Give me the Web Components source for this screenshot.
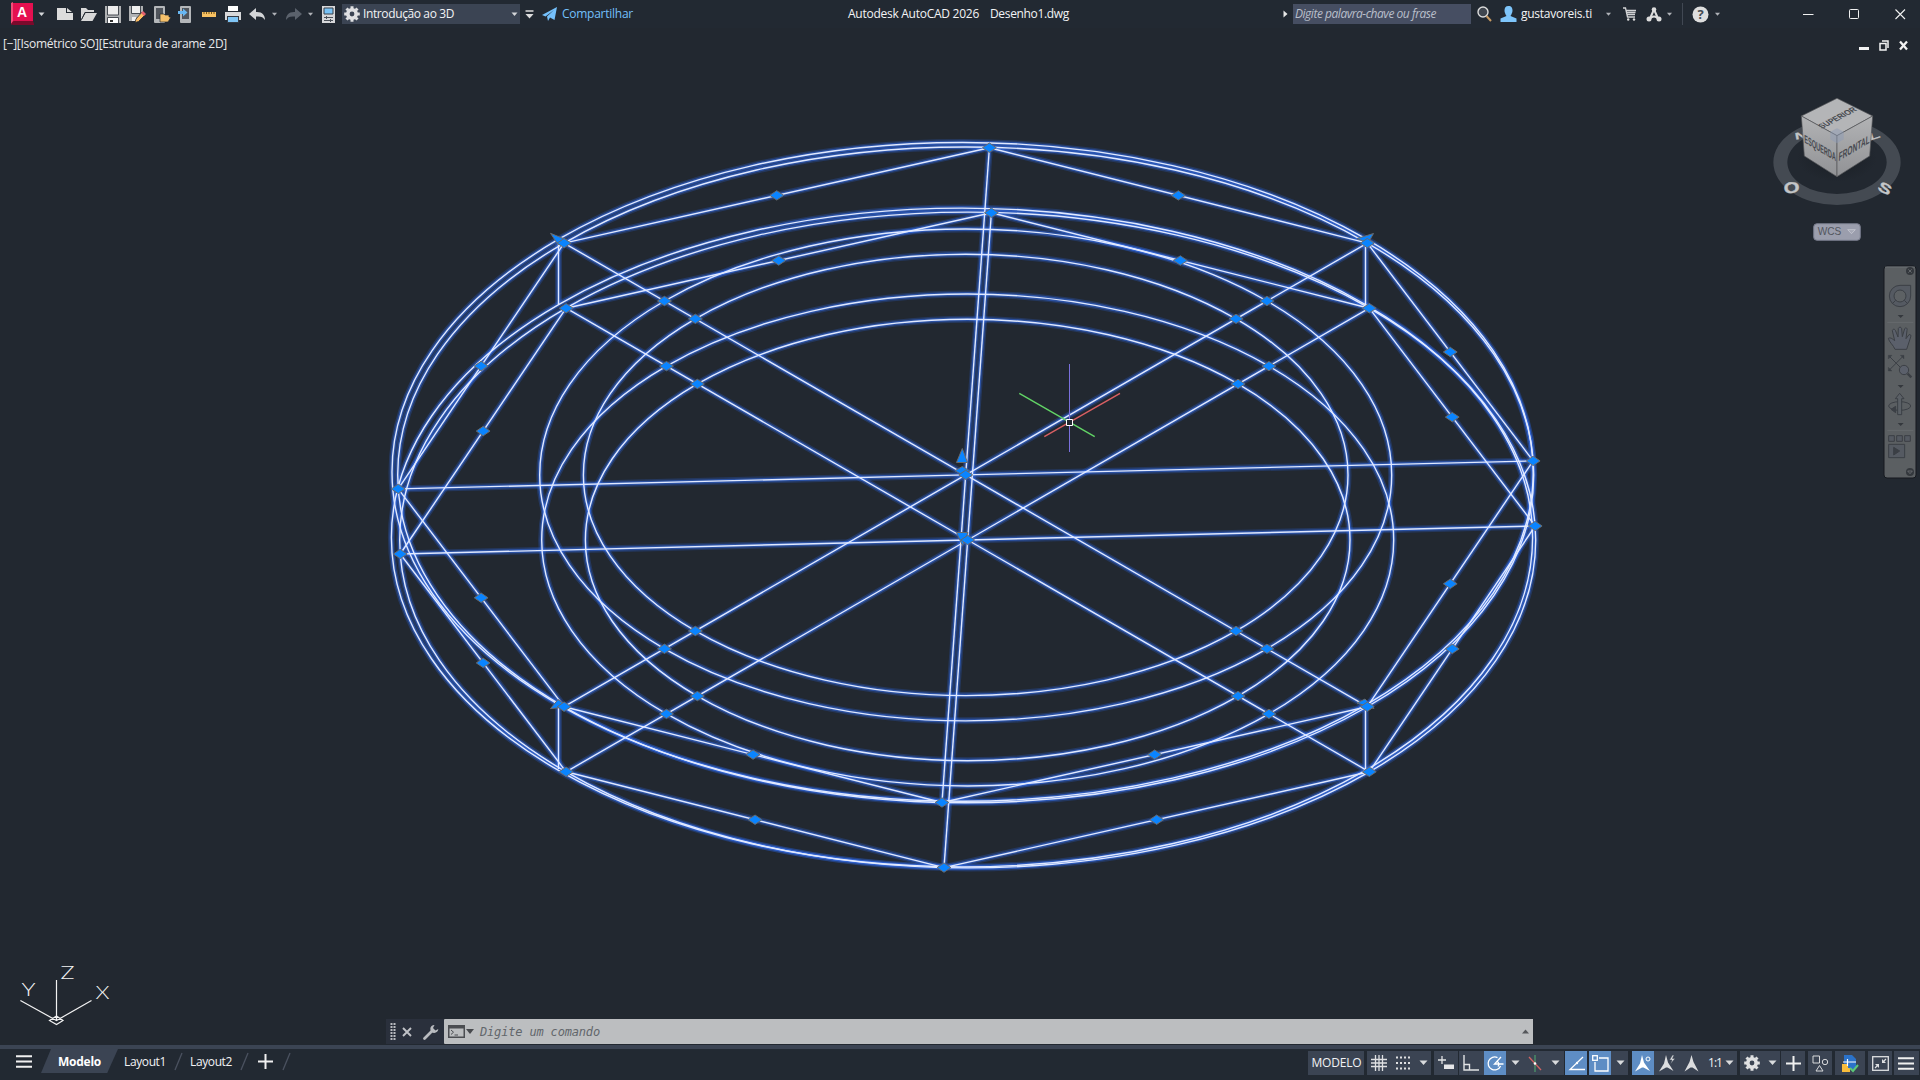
<!DOCTYPE html>
<html lang="pt-BR">
<head>
<meta charset="utf-8">
<title>Autodesk AutoCAD 2026 Desenho1.dwg</title>
<style>
html,body{margin:0;height:100%;overflow:hidden;background:#222830}
body{font-family:"Open Sans","Noto Sans",sans-serif;font-size:12px;color:#f2f3f5}
</style>
</head>
<body>
<cad-app></cad-app>
<script>
const define=(name,html,after)=>customElements.define(name,class extends HTMLElement{
  connectedCallback(){
    if(this.shadowRoot)return;
    this.attachShadow({mode:'open'}).innerHTML=typeof html==='function'?html(this):html;
    if(after)after(this);
  }
});

/* text spaced so that it fills a given width */
define('fit-text','<style>:host{display:inline-block;white-space:pre;flex:none}</style><span><slot></slot></span>',el=>{
  const w=+el.getAttribute('w'),n=el.textContent.length,s=el.shadowRoot.querySelector('span');
  el.style.width=w+'px';
  const nat=s.getBoundingClientRect().width;
  s.style.letterSpacing=((w-nat)/n)+'px';
});

const caret='<path d="M-3-1.5H3L0 2Z" fill="#d4d6d9"/>';
/* flexible gap of fixed width */
define('gap-x',el=>`<style>:host{display:block;flex:none;width:${el.getAttribute('w')}px}</style>`);

const ICONS={
 logo:[24,24,'<path d="M0 3 3 1V20L0 23Z" fill="#a0092f"/><path d="M2 1H22V19H2Z" fill="#e51050"/><path d="M0 1 2 0V19L0 22Z" fill="#f0507a"/><path d="M0 22 3 19H22L23 22V23H2Z" fill="#7c0a2c"/>'],
 down:[7,6,'<g transform="translate(3.5 3)">'+caret+'</g>'],
 downDim:[7,6,'<g transform="translate(3.5 3) scale(.85)" opacity=".8">'+caret+'</g>'],
 downBig:[9,6,'<path d="M.5.5H8.5L4.5 5Z" fill="#d9dbdd"/>'],
 right:[5,8,'<path d="M.5.5 4.5 4 .5 7.5Z" fill="#e8e8e8"/>'],
 fresh:[16,14,'<path d="M0 1H9V6H16V13H0Z" fill="#dcdcdc"/><path d="M10 1 15 5H10Z" fill="#dcdcdc"/>'],
 open:[17,15,'<path d="M1 1H6L8 3H14V5H5L1 13Z" fill="#d8d8d8"/><path d="M5.500 6H17L12.500 14H1Z" fill="#d8d8d8"/><path d="M5 5.500 1.500 12.500M5 5.500H15" stroke="#222830" stroke-width=".9" fill="none"/>'],
 save:[16,17,'<path d="M0 0H16V17H0Z" fill="#b0b2b4"/><path d="M3 0H13V9H3Z" fill="#ededed"/><path d="M3 12H13V17H3Z" fill="#fff"/><path d="M5 14h3v2H5z" fill="#333"/><path d="M2.500 0V9H13.500V0M2.500 17V11.500H13.500V17" fill="none" stroke="#464b52"/>'],
 saveas:[17,17,'<path d="M0 0H14V8L7 15H0Z" fill="#b0b2b4"/><path d="M3 0H11V7H3Z" fill="#eee"/><path d="M2.500 0V7.500H11.500V0" fill="none" stroke="#464b52"/><path d="M3 11H7V15H3Z" fill="#eee"/><path d="M7 13 13 6 16 9 9.500 15.500 6 16.500Z" fill="#ffbe63" stroke="#222830" stroke-width=".8"/><path d="M12 7 14 5 17 8 15 10Z" fill="#e5616f"/>'],
 phoneOpen:[17,17,'<rect width="11" height="17" rx="1" fill="#b4b7ba"/><path d="M2 2H9V13H2Z" fill="#50555c"/><path d="M6 8H10L11 9H15V11H17L14 16H6Z" fill="#f5c06a" stroke="#222830" stroke-width=".7"/>'],
 phoneOut:[13,17,'<rect x="2" width="11" height="17" rx="1" fill="#b4b7ba"/><path d="M4 2H11V13H4Z" fill="#50555c"/><path d="M0 5H5V2.500L9.500 6.500 5 10.500V8H0Z" fill="#68b7f2"/>'],
 ruler:[14,5,'<path d="M0 0H14V5H0Z" fill="#f9c262"/><path d="M2 0V2M4.500 0V2M7 0V2M9.500 0V2M12 0V2" stroke="#7b5a1c"/>'],
 print:[16,17,'<path d="M3 0H13V5H3Z" fill="#fff"/><path d="M0 6H16V14H0Z" fill="#d7d8da"/><path d="M2 10H14V17H2Z" fill="#343a43"/><path d="M3 11H13V16H3Z" fill="#7fc5f5"/>'],
 undo:[17,13,'<path d="M0 6 7 0V4C13 3.500 16 7 16 12 14 9 12 8 7 8.500V12Z" fill="#d3d5d7"/>'],
 redo:[17,13,'<path d="M17 6 10 0V4C4 3.500 1 7 1 12 3 9 5 8 10 8.500V12Z" fill="#5b626c"/>'],
 sheet:[13,17,'<rect width="13" height="17" fill="#d7d8da"/><path d="M2 2H11V8H2Z" fill="#79c3f6" stroke="#3a4048"/><path d="M2 11.500H11M2 14.500H11M4.500 10V13M8.500 13V16" stroke="#4a5058"/>'],
 gear:[16,16,'<circle cx="8" cy="8" r="4.200" fill="none" stroke="#dfe0e2" stroke-width="3.600"/><g stroke="#dfe0e2" stroke-width="3"><path d="M8 .2V3M8 13V15.800M.2 8H3M13 8H15.800M2.500 2.500 4.300 4.300M11.700 11.700 13.500 13.500M2.500 13.500 4.300 11.700M11.700 4.300 13.500 2.500"/></g>'],
 custom:[9,9,'<path d="M.5 1H8.500" stroke="#ddd" stroke-width="1.500"/><path d="M.5 4H8.500L4.500 8.500Z" fill="#ddd"/>'],
 send:[16,14,'<path d="M0 8 15 0 12.500 13 8 10.500 6 14 5 9.500 12 3 3.500 9.500Z" fill="#74c0fb"/>'],
 search:[15,16,'<circle cx="6" cy="6" r="5" fill="#40464f" stroke="#dcdcdc" stroke-width="1.400"/><path d="M9.500 10 14 15" stroke="#c99a62" stroke-width="2"/>'],
 user:[17,16,'<path d="M8.500 0C11.500 0 12.500 2 12.500 4.500S10.500 10 10.500 10L16.500 12.500V16H.5V12.500L6.500 10S4.500 7 4.500 4.500 5.500 0 8.500 0" fill="#7ec5fb"/>'],
 cart:[14,14,'<path d="M0 1H2.500L4.500 10H12M3.500 3.500H13M4 5.500H12.500M4.500 7.500H12" stroke="#d2d3d5" fill="none" stroke-width="1.300"/><circle cx="5.200" cy="12.500" r="1.200" fill="#ddd"/><circle cx="11" cy="12.500" r="1.200" fill="#ddd"/>'],
 adsk:[16,15,'<path d="M8 2.500 3.500 12.500M8 2.500 12.500 12.500M4 11.500Q8 7.500 12 11.500" stroke="#dcdcdc" stroke-width="2" fill="none"/><circle cx="8" cy="2.500" r="2.300" fill="#dcdcdc"/><circle cx="3" cy="12" r="2.500" fill="#dcdcdc"/><circle cx="13" cy="12" r="2.500" fill="#dcdcdc"/>'],
 help:[17,17,'<circle cx="8.500" cy="8.500" r="8" fill="#dedede"/>'],
 min:[11,11,'<path d="M0 5.500H10.500" stroke="#f1f1f1"/>'],
 max:[11,11,'<rect x=".5" y=".5" width="9" height="9" rx="1" fill="none" stroke="#f1f1f1"/>'],
 close:[11,11,'<path d="M.5.5 10 10M10 .5.5 10" stroke="#f1f1f1" stroke-width="1.100"/>'],
 vmin:[10,11,'<path d="M0 7H10V10H0Z" fill="#f2f2f2"/>'],
 vrest:[10,11,'<path d="M3 1H9V8M1 3.500H7V10H1Z" stroke="#f2f2f2" stroke-width="1.500" fill="none"/>'],
 vclose:[9,9,'<path d="M1 .5 8 8.500M8 .5 1 8.500" stroke="#f2f2f2" stroke-width="2.300"/>'],
 burger:[16,13,'<path d="M0 1.200H16M0 6.500H16M0 11.800H16" stroke="#f0f0f0" stroke-width="2"/>'],
 plus:[15,15,'<path d="M7.500 0V15M0 7.500H15" stroke="#f0f0f0" stroke-width="2"/>'],
 slash:[9,17,'<path d="M8 0 1 17" stroke="#4b5260" stroke-width="1.300"/>'],
 grip:[6,17,'<path d="M1.500 0V17M4.500 0V17" stroke="#b9bbc0" stroke-width="2" stroke-dasharray="2 1"/>'],
 cx:[10,10,'<path d="M1 1 9 9M9 1 1 9" stroke="#c0c2c6" stroke-width="1.900"/>'],
 wrench:[16,16,'<path d="M1.500 14.500 9 7" stroke="#b9bbbf" stroke-width="2.800" stroke-linecap="round"/><path d="M11.500 1A4 4 0 1 0 15.300 5L12.500 6.500 10 4Z" fill="#b9bbbf"/>'],
 term:[17,13,'<path d="M.75 1H16.250V12.200H.75Z" fill="none" stroke="#4b4d51" stroke-width="1.500"/><path d="M0 0H17V3.500H0Z" fill="#4b4d51"/><path d="M3 5 5.500 7.200 3 9.500M6.500 10H10" stroke="#4b4d51" fill="none"/>'],
 cdown:[8,5,'<path d="M0 0H8L4 5Z" fill="#47494d"/>'],
 cup:[8,5,'<path d="M0 4.500H7L3.500.5Z" fill="#55575b"/>'],
 grid:[16,16,'<path d="M4.500 0V16M8 0V16M11.500 0V16M0 4.500H16M0 8H16M0 11.500H16" stroke="#dfe0e2" stroke-width="1.300"/>'],
 dots:[14,14,'<path d="M0 1.500H14M0 7H14M0 12.500H14" stroke="#dfe0e2" stroke-width="2" stroke-dasharray="2 2"/>'],
 snap:[17,14,'<path d="M4 0V8M0 4H8" stroke="#e2e3e5" stroke-width="1.300"/><path d="M6 8.500H16V13H6Z" fill="#e6e6e8"/>'],
 ortho:[18,17,'<path d="M2 0V15H17M2 9.500H7.500V15" stroke="#e2e3e5" stroke-width="1.400" fill="none"/>'],
 polar:[17,17,'<path d="M10.500 2.600A6.500 6.500 0 1 0 13.600 11M16.500 9H7.500L14 2M10.200 6.200A4 4 0 0 1 11 11.500" stroke="#fff" stroke-width="1.300" fill="none"/>'],
 iso:[14,17,'<path d="M7 0V17" stroke="#51ad70"/><path d="M1 2 13 15" stroke="#d06464" stroke-width="1.300"/><circle cx="7" cy="8.500" r="1.300" fill="#fff"/>'],
 track:[17,15,'<path d="M15 1 2 13.500H17" stroke="#fff" stroke-width="1.300" fill="none"/><circle cx="9" cy="7" r="1.200" fill="#fff"/>'],
 osnap:[17,17,'<path d="M3 7V16H16V3H7" stroke="#fff" stroke-width="1.300" fill="none"/><rect x=".7" y=".7" width="4.600" height="4.600" fill="none" stroke="#fff" stroke-width="1.300"/>'],
 ann1:[17,17,'<path d="M7 0 9 7.500 15 16 8.500 12.500 7 12.500 0 16.500 5 8.500Z" fill="#fff"/><circle cx="13" cy="4" r="2" fill="none" stroke="#fff"/>'],
 ann2:[17,17,'<path d="M7 0 9 7.500 14.500 16 8.500 12.500 7 12.500 0 16.500 5 8.500Z" fill="#dcdddf"/><path d="M13.500 0 10.500 5H13L11.500 9 16 3.500H13.500L15 0Z" fill="#dcdddf" stroke="#3b4453" stroke-width=".5"/>'],
 ann3:[15,17,'<path d="M7.500 0 9.500 7 14.500 16.500 8.500 12.500H6.500L.5 16.500 5.500 7Z" fill="#dcdddf"/>'],
 shapes:[17,17,'<path d="M1 1H7.500V8H1Z" stroke="#d8d9db" fill="none"/><circle cx="13" cy="7" r="2.700" stroke="#d8d9db" fill="none"/><path d="M7.500 10.500 11 16H4Z" stroke="#d8d9db" fill="none"/>'],
 file:[17,17,'<path d="M2 0H10L14 4V14H2Z" fill="#2b72c9"/><path d="M0 9H6V13H8V17H0Z" fill="#f9bd3c"/><path d="M5.500 4V11M1 7H14" stroke="#fff" stroke-width="1.200"/><path d="M8 13 11 16 16 10" stroke="#5cc878" stroke-width="2" fill="none"/>'],
 clean:[17,15,'<rect x=".7" y=".7" width="15.600" height="13.600" fill="none" stroke="#dfe0e2" stroke-width="1.300"/><path d="M3 8H7V12ZM10 3V7H14Z" fill="#dfe0e2"/><path d="M3 12 6 9M14 3 11 6" stroke="#dfe0e2" stroke-width="1.200"/>']
};
define('cad-icon',el=>{
  const [w,h,g]=ICONS[el.getAttribute('n')];
  return `<style>:host{display:block;flex:none;width:${w}px;height:${h}px}svg{display:block;overflow:visible}</style><svg width="${w}" height="${h}" viewBox="0 0 ${w} ${h}">${g}</svg>`;
});

/* every item carries the x where it starts; gaps are derived from the previous end */
const row=(items,start=0)=>{
  let x=start,out='';
  for(const [at,w,html] of items){ out+=`<gap-x w="${(at-x).toFixed(2)}"></gap-x>${html}`; x=at+w; }
  return out;
};
const ic=(at,n)=>[at,ICONS[n][0],`<cad-icon n="${n}"></cad-icon>`];
const tx=(at,w,t,c='')=>[at,w,`<fit-text class="${c}" w="${w}">${t}</fit-text>`];

define('title-bar',()=>`<style>
:host{display:flex;align-items:center;height:28px;background:#222932;font-size:12px}
fit-text{padding-bottom:1px}
.logo{display:grid;width:24px;height:24px;flex:none}
.logo>*{grid-area:1/1}.logo b{font:bold 14px "Liberation Sans",sans-serif;color:#fff;place-self:center;transform:translate(-1px,-2px)}
.sel,.find{display:flex;align-items:center;width:178px;height:20px;background:#3b4453;flex:none}
.find{background:#464e62;color:#b9bfca;font-style:italic}
.share{color:#74c0fb}
.help{display:grid;width:17px;flex:none}.help>*{grid-area:1/1}.help b{place-self:center;color:#444a52;font-size:13px;line-height:17px}
.sep{width:1px;height:22px;background:#414853;flex:none}
</style>`+row([
 [11,24,'<div class="logo"><cad-icon n="logo"></cad-icon><b>A</b></div>'],ic(38,'down'),ic(57,'fresh'),ic(80,'open'),ic(105,'save'),ic(129,'saveas'),
 ic(154,'phoneOpen'),ic(178,'phoneOut'),ic(202,'ruler'),ic(225,'print'),ic(249,'undo'),ic(271,'downDim'),ic(285,'redo'),ic(307,'downDim'),ic(322,'sheet'),
 [342,178,'<div class="sel">'+row([ic(2,'gear'),tx(21,91,'Introdução ao 3D'),ic(169,'down')])+'</div>'],
 ic(524.5,'custom'),ic(542,'send'),tx(562,71,'Compartilhar','share'),
 tx(848,131,'Autodesk AutoCAD 2026'),tx(990,79,'Desenho1.dwg'),
 ic(1283,'right'),[1293,178,'<div class="find">'+row([tx(2,141,'Digite palavra-chave ou frase')])+'</div>'],
 ic(1477,'search'),ic(1500,'user'),tx(1521,71,'gustavoreis.ti'),ic(1605,'downDim'),ic(1623,'cart'),ic(1646,'adsk'),ic(1666,'downDim'),
 [1682,1,'<div class="sep"></div>'],[1692,17,'<div class="help"><cad-icon n="help"></cad-icon><b>?</b></div>'],ic(1714,'downDim'),
 ic(1803,'min'),ic(1849,'max'),ic(1895,'close')
]));

define('view-header',()=>`<style>:host{display:flex;align-items:center;height:32px;font-size:12px;color:#e8e9eb}fit-text{padding-bottom:2px}cad-icon{margin-top:2px}</style>`
 +row([tx(3,224,'[−][Isométrico SO][Estrutura de arame 2D]'),ic(1859,'vmin'),ic(1879,'vrest'),ic(1899,'vclose')]));

define('wire-model',()=>{
  const K=.5773,S=Math.SQRT1_2,figs=[],grips=[];
  const ell=(cx,cy,a)=>figs.push(`<ellipse cx="${cx}" cy="${cy}" rx="${a}" ry="${a*K}"/>`);
  const ln=(a,b)=>figs.push(`<path d="M${a}L${b}"/>`);
  [[965.7,474.9,962.6,471.9],[967.7,540,962,537.5]].forEach(([cx,cy,ox,oy])=>{
    const c=[cx,cy];
    ell(cx,cy,568);ell(ox,oy,570.6);ell(cx,cy,426);ell(cx,cy,382.3);
    const P=[[23.7,-327.2],[401.6,-231.8],[567.5,-14],[401.6,231.8],[-23.7,327.6],[-401.6,231.8],[-567.5,14],[-401.6,-231.8]].map(([x,y])=>[cx+x,cy+y]);
    P.forEach((p,i)=>{const q=P[(i+1)%8];ln(p,q);ln(c,p);grips.push(p,[(p[0]+q[0])/2,(p[1]+q[1])/2]);});
    for(const a of [426,382.3])for(const sx of [-1,1])for(const sy of [-1,1])grips.push([cx+sx*a*S,cy+sy*a*S*K]);
    grips.push(c);
  });
  for(const x of [558.5,1365.5]){ln([x,240],[x,304]);ln([x,704],[x,769]);}
  const f=figs.join('');
  const tri=d=>`<path d="${d}"/>`;
  return `<style>:host{display:block}svg{display:block}
  .g{fill:none}.g1{stroke:#2c63e0;stroke-opacity:.26;stroke-width:7}.g2{stroke:#346eee;stroke-opacity:.48;stroke-width:4}.g3{stroke:#e0e9ff;stroke-width:1.4}
  .h{fill:#0a84ff;stroke:#686a6c;stroke-width:1}
  text{font-family:Lato,"Open Sans",sans-serif;font-weight:300;font-size:18px;fill:#f4f4f4}</style>
  <svg width="1920" height="985" viewBox="0 60 1920 985">
  <g class="g g1">${f}</g><g class="g g2">${f}</g><g class="g g3">${f}</g>
  <g class="h">${tri('M962.3 448.500 967.500 462.500H956.500Z')+tri('M955 470.700 962.300 466.500 969.500 470.700 962.300 475Z')+tri('M956.500 532.500H968L962.500 545.500Z')+tri('M550.500 233.300 567 240 558 244.500Z')+tri('M1373.500 233.500 1368 243 1357 238.500Z')+tri('M550.500 708.600 558 699.500 568 707Z')+tri('M1357 703 1365 699 1374 708.500Z')}
  ${grips.map(([x,y])=>`<path d="M${x-6.900} ${y}L${x} ${y-4.700}L${x+6.900} ${y}L${x} ${y+4.700}Z"/>`).join('')}</g>
  <g stroke-width="1.400"><path d="M1069.500 364V452" stroke="#7a70dc" stroke-width="1"/><path d="M1019.300 393.300 1094.700 436.700" stroke="#62d566"/><path d="M1120 393.300 1044.300 436.700" stroke="#d95f63"/></g>
  <path d="M1066.500 419.500H1072.500V425.500H1066.500Z" fill="#222830" stroke="#fff"/>
  <g fill="none" stroke="#f2f2f2" stroke-width="1.200"><path d="M56.500 980V1020M20.400 1000.500 56.500 1020.500 91.500 1000.500M49.500 1020.500 56.500 1016 63 1020.500 56.500 1024.500Z"/></g>
  <text x="60.500" y="979" textLength="14" lengthAdjust="spacingAndGlyphs">Z</text><text x="21.500" y="996" textLength="14" lengthAdjust="spacingAndGlyphs">Y</text><text x="95.500" y="999" textLength="14" lengthAdjust="spacingAndGlyphs">X</text>
  </svg>`;
});

define('view-cube',`<style>:host{display:block}svg{display:block}text{font-family:"Liberation Sans",sans-serif}</style>
<svg width="180" height="164" viewBox="0 0 540 492">
<defs><linearGradient id="l" x2="0" y2="1"><stop stop-color="#b2b3b5"/><stop offset="1" stop-color="#919295"/></linearGradient><radialGradient id="s"><stop stop-color="#14181d" stop-opacity=".6"/><stop offset="1" stop-color="#14181d" stop-opacity="0"/></radialGradient></defs>
<path fill-rule="evenodd" fill="#444a52" d="M100 247A191 128 0 1 0 482 247A191 128 0 1 0 100 247ZM142 247A149 95 0 1 1 440 247A149 95 0 1 1 142 247Z"/>
<ellipse cx="291" cy="235" rx="120" ry="70" fill="url(#s)"/>
<g fill="#c4c6c8" stroke="#c4c6c8" font-weight="bold"><text font-size="42" text-anchor="middle" transform="translate(157 339) rotate(-8) scale(1.450 1.100)">O</text><text font-size="42" text-anchor="middle" transform="translate(428 338) rotate(28) scale(1.450 1)">S</text><text font-size="38" text-anchor="middle" transform="translate(184 176) rotate(-10) scale(1.300 .75)">N</text><text font-size="38" text-anchor="middle" transform="translate(406 177) rotate(-18) scale(1.500 .75)">L</text></g>
<g stroke="#515356" stroke-width="2"><path d="M291 55 398 108 291 167 184 108Z" fill="#b4b5b7"/><path d="M184 108 291 167V290L193 228Z" fill="url(#l)"/><path d="M398 108 291 167V290L389 228Z" fill="url(#l)"/></g>
<path d="M291 145 311 155V178L291 190 271 178V155Z" fill="#8e9bb5" opacity=".5"/>
<g fill="#474a50" font-weight="bold" text-anchor="middle"><text font-size="33" transform="matrix(.87 -.46 .62 .5 299 119)" textLength="122" lengthAdjust="spacingAndGlyphs">SUPERIOR</text><text font-size="35" transform="matrix(.84 .5 .04 1 241 216)" textLength="113" lengthAdjust="spacingAndGlyphs">ESQUERDA</text><text font-size="36" transform="matrix(.84 -.5 -.04 1 342 216)" textLength="110" lengthAdjust="spacingAndGlyphs">FRONTAL</text></g>
<rect x="221" y="431" width="140" height="50" rx="10" fill="#9b9ead" stroke="#747888" stroke-width="3"/><text x="233" y="465" font-size="33" textLength="71" lengthAdjust="spacingAndGlyphs" fill="#52565e">WCS</text><path d="M323 449H346L334.500 461Z" fill="#a5a8b6" stroke="#d0d2da" stroke-width="2"/>
</svg>`);

define('nav-bar',`<style>:host{display:block}svg{display:block}</style>
<svg width="34" height="214" viewBox="429 555 102 642"><rect x="432" y="558" width="96" height="636" rx="9" fill="#5b5f62" stroke="#16191e" stroke-width="3"/><path d="M435 561H525" stroke="#777b7e" stroke-width="2"/>
<path d="M442 727H520M442 1051H520" stroke="#6c7073" stroke-width="2"/>
<g fill="none" stroke="#3b3f45" stroke-width="3"><path d="M480 616H512V648A32 32 0 1 1 480 616Z" fill="#555a62"/><circle cx="480" cy="648" r="18" fill="#5d6164"/><path d="M467 661 457 671M493 661 503 671"/>
<path d="M465 808C460 795 447 786 445 775 452 771 459 778 464 782L457 752C459 745 465 747 467 753L474 771 475 745C478 740 483 740 485 746L487 770 494 746C498 741 503 745 501 751L498 776 507 764C512 762 514 767 512 771L500 808Z" fill="#5b606b"/>
<path d="M447 828 490 871M490 828 447 871"/><path d="M445 826H456L445 837ZM492 826H481L492 837ZM445 873H456L445 862Z" fill="#3b3f45" stroke-width="1"/><circle cx="492" cy="870" r="14" fill="#5b606b"/><path d="M503 881 514 892" stroke-width="7"/>
<ellipse cx="479" cy="978" rx="33" ry="13"/><path d="M473 1004V956H466L479 940 492 956H485V1004Z" fill="#5b6066"/><path d="M453 988 467 979V998Z" fill="#3b3f45"/>
<path d="M446 1067H463V1084H446ZM470 1067H487V1084H470ZM494 1067H511V1084H494ZM446 1093H494V1133H446Z" fill="#555a62"/><path d="M461 1102 479 1113 461 1125Z" fill="#3b3f45"/></g>
<g fill="#34383d"><path d="M473 705H491L482 714ZM473 915H491L482 924ZM473 1029H491L482 1038Z"/><circle cx="510" cy="573" r="12"/><circle cx="510" cy="1176" r="12"/></g>
<path d="M505 568 515 578M515 568 505 578M503 1173H517L510 1181Z" stroke="#6c7073" stroke-width="2.500" fill="none"/></svg>`);

define('command-line',()=>`<style>:host{display:flex;height:25px;width:1147px}
.h{display:flex;align-items:center;width:58px;flex:none;background:#2a303c}
.i{display:flex;align-items:center;flex:1;background:#bcbec0;border-radius:1px 0 0 1px;font:italic 12px "DejaVu Sans Mono",monospace;color:#62666b}</style>
<div class="h">${row([ic(4,'grip'),ic(16,'cx'),ic(37,'wrench')])}</div><div class="i">${row([ic(4,'term'),ic(22,'cdown'),tx(36,120,'Digite um comando'),ic(1078,'cup')])}</div>`);

/* cells: [start, end, contents] */
const cell=(a,b,items,on)=>[a,b-a,`<div class="c${on?' on':''}" style="width:${b-a}px">${row(items,a)}</div>`];
define('status-bar',()=>`<style>:host{display:flex;height:31px;border-top:4px solid #3b4453;background:#222932;font-size:12px;color:#f2f3f5}
.tab{display:flex;align-items:center;height:24px;width:77px;flex:none;background:#3b4453;clip-path:polygon(13% 0,100% 0,86% 100%,0 100%);font-weight:bold;color:#fff}
.r{display:flex;align-items:center;height:24px}.s{display:flex;height:24px;align-items:center;margin-top:2px}
.c{display:flex;align-items:center;height:24px;background:#3b4453;flex:none;line-height:16px}.on{background:#5e8dc4}</style>
<div class="r">${row([ic(16,'burger'),[41,77,'<div class="tab">'+row([tx(17,43,'Modelo')])+'</div>'],tx(124,42,'Layout1'),ic(174,'slash'),tx(190,42,'Layout2'),ic(240,'slash'),ic(258,'plus'),ic(282,'slash')])}</div>
<div class="s">${row([
 cell(1308,1364,[tx(1311.5,50,'MODELO')]),
 cell(1367,1431,[ic(1371,'grid'),ic(1396,'dots'),ic(1419,'downBig')]),
 cell(1434,1458,[ic(1437.500,'snap')]),cell(1459,1484,[ic(1462,'ortho')]),cell(1484,1506,[ic(1487,'polar')],1),
 cell(1506,1564,[ic(1510.500,'downBig'),ic(1528,'iso'),ic(1550.500,'downBig')]),
 cell(1565,1587,[ic(1567.500,'track')],1),cell(1589,1611,[ic(1592,'osnap')],1),cell(1611,1628,[ic(1615.500,'downBig')]),
 cell(1632,1654,[ic(1635,'ann1')],1),cell(1654,1737,[ic(1659,'ann2'),ic(1683.500,'ann3'),tx(1708,14,'1:1'),ic(1725,'downBig')]),
 cell(1740,1780,[ic(1743.500,'gear'),ic(1768,'downBig')]),cell(1781,1805,[ic(1785.500,'plus')]),cell(1808,1832,[ic(1811.500,'shapes')]),
 cell(1835,1865,[ic(1842,'file')]),cell(1868,1892,[ic(1872,'clean')]),cell(1894,1919,[ic(1898,'burger')])
],291)}</div>`);

define('cad-app',`<style>:host{display:flex;flex-direction:column;width:1920px;height:1080px;background:#222830}
.canvas{flex:1;position:relative;min-height:0}
view-cube,nav-bar,command-line{position:absolute}
view-cube{right:0;top:20px}nav-bar{right:3px;top:205px}command-line{left:386px;bottom:1px}</style>
<title-bar></title-bar><view-header></view-header><div class="canvas"><wire-model></wire-model><view-cube></view-cube><nav-bar></nav-bar><command-line></command-line></div><status-bar></status-bar>`);
</script>
</body>
</html>
